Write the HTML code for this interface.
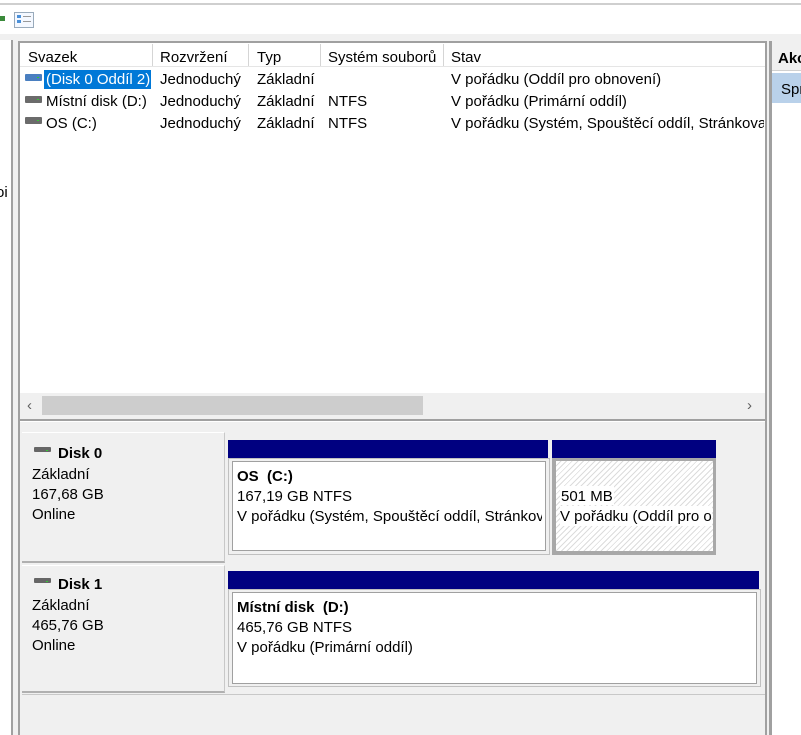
<!DOCTYPE html>
<html><head><meta charset="utf-8"><style>
*{margin:0;padding:0;box-sizing:border-box}
body{width:801px;height:735px;overflow:hidden;background:#f0f0f0;font-family:"Liberation Sans",sans-serif;font-size:15px;color:#000;position:relative}
.a{position:absolute}
.t{position:absolute;white-space:nowrap;line-height:19px}
.b{font-weight:bold}
.hdiv{position:absolute;top:44px;width:1px;height:22px;background:#d5d5d5}
.ico{position:absolute;width:17px;height:7px;background:#6b6b6b;border-radius:1px}
.ico:after{content:"";position:absolute;right:3px;top:3px;width:2px;height:1px;background:#3c3}
</style></head><body>
<div class="a" style="left:0;top:0;width:801px;height:34px;background:#fff;border-top:1px solid #fff"></div>
<div class="a" style="left:0;top:3px;width:801px;height:2px;background:#cfcfcf"></div>
<div class="a" style="left:0;top:16px;width:5px;height:5px;background:#3a8a3a"></div>
<div class="a" style="left:14px;top:12px;width:20px;height:16px;border:1px solid #9ab;background:#f4f8ff"></div>
<div class="a" style="left:17px;top:15px;width:4px;height:3px;background:#4a90d9"></div>
<div class="a" style="left:17px;top:20px;width:4px;height:3px;background:#4a90d9"></div>
<div class="a" style="left:23px;top:16px;width:8px;height:1px;background:#999"></div>
<div class="a" style="left:23px;top:21px;width:8px;height:1px;background:#999"></div>
<div class="a" style="left:0;top:40px;width:13px;height:695px;background:#fff;border-right:2px solid #a0a0a0"></div>
<div class="t" style="left:-4px;top:183px">oi</div>
<div class="a" style="left:18px;top:41px;width:749px;height:694px;border:2px solid #a0a0a0;border-bottom:none;background:#f0f0f0"></div>
<div class="a" style="left:20px;top:43px;width:745px;height:350px;background:#fff"></div>
<div class="a" style="left:20px;top:43px;width:745px;height:24px;background:#fff;border-bottom:1px solid #e5e5e5"></div>
<div class="hdiv" style="left:152px"></div><div class="hdiv" style="left:248px"></div><div class="hdiv" style="left:320px"></div><div class="hdiv" style="left:443px"></div>
<div class="t" style="left:28px;top:48px">Svazek</div>
<div class="t" style="left:160px;top:48px">Rozvržení</div>
<div class="t" style="left:257px;top:48px">Typ</div>
<div class="t" style="left:328px;top:48px">Systém souborů</div>
<div class="t" style="left:451px;top:48px">Stav</div>
<div class="ico" style="left:25px;top:74px;background:#4a7fc0"></div>
<div class="a" style="left:44px;top:70px;width:107px;height:19px;background:#0078d7"></div>
<div class="t" style="left:46px;top:70px;color:#fff">(Disk 0 Oddíl 2)</div>
<div class="ico" style="left:25px;top:96px"></div>
<div class="t" style="left:46px;top:92px">Místní disk (D:)</div>
<div class="ico" style="left:25px;top:117px"></div>
<div class="t" style="left:46px;top:114px">OS (C:)</div>
<div class="t" style="left:160px;top:70px">Jednoduchý</div><div class="t" style="left:257px;top:70px">Základní</div><div class="t" style="left:451px;top:70px">V pořádku (Oddíl pro obnovení)</div>
<div class="t" style="left:160px;top:92px">Jednoduchý</div><div class="t" style="left:257px;top:92px">Základní</div><div class="t" style="left:328px;top:92px">NTFS</div><div class="t" style="left:451px;top:92px">V pořádku (Primární oddíl)</div>
<div class="t" style="left:160px;top:114px">Jednoduchý</div><div class="t" style="left:257px;top:114px">Základní</div><div class="t" style="left:328px;top:114px">NTFS</div>
<div class="a" style="left:451px;top:114px;width:313px;overflow:hidden;white-space:nowrap;line-height:19px">V pořádku (Systém, Spouštěcí oddíl, Stránkovací</div>
<div class="a" style="left:20px;top:395px;width:745px;height:21px;background:#f0f0f0"></div>
<div class="a" style="left:42px;top:396px;width:381px;height:19px;background:#cdcdcd"></div>
<div class="t" style="left:27px;top:396px;color:#606060">‹</div>
<div class="t" style="left:747px;top:396px;color:#606060">›</div>
<div class="a" style="left:20px;top:419px;width:745px;height:3px;border-top:2px solid #a0a0a0;border-bottom:1px solid #fff"></div>
<div class="a" style="left:22px;top:432px;width:203px;height:131px;background:#f0f0f0;border-right:1px solid #c8c8c8;border-bottom:2px solid #b0b0b0;border-top:1px solid #fff"></div>
<div class="ico" style="left:34px;top:447px;height:5px;background:#666"></div>
<div class="t b" style="left:58px;top:444px">Disk 0</div>
<div class="t" style="left:32px;top:465px">Základní</div>
<div class="t" style="left:32px;top:485px">167,68 GB</div>
<div class="t" style="left:32px;top:505px">Online</div>
<div class="a" style="left:228px;top:440px;width:320px;height:18px;background:#000080"></div>
<div class="a" style="left:552px;top:440px;width:164px;height:18px;background:#000080"></div>
<div class="a" style="left:228px;top:458px;width:322px;height:97px;background:#f0f0f0;border:1px solid #c0c0c0"></div>
<div class="a" style="left:232px;top:461px;width:314px;height:90px;background:#fff;border:1px solid #a0a0a0"></div>
<div class="t b" style="left:237px;top:467px">OS&nbsp; (C:)</div>
<div class="t" style="left:237px;top:487px">167,19 GB NTFS</div>
<div class="a" style="left:237px;top:507px;width:305px;overflow:hidden;white-space:nowrap;line-height:19px">V pořádku (Systém, Spouštěcí oddíl, Stránkovací</div>
<div class="a" style="left:552px;top:458px;width:164px;height:97px;background:#a8a8a8"></div>
<div class="a" style="left:556px;top:461px;width:157px;height:90px;background:repeating-linear-gradient(135deg,#fff 0 3px,#dcdcdc 3px 4px)"></div>
<div class="a" style="left:560px;top:486px;width:54px;height:19px;background:#fff"></div>
<div class="t" style="left:561px;top:487px">501 MB</div>
<div class="a" style="left:560px;top:506px;width:152px;height:20px;background:#fff;overflow:hidden;white-space:nowrap;line-height:19px;padding-top:1px">V pořádku (Oddíl pro obnovení)</div>
<div class="a" style="left:22px;top:565px;width:203px;height:128px;background:#f0f0f0;border-right:1px solid #c8c8c8;border-bottom:2px solid #b0b0b0;border-top:1px solid #fff"></div>
<div class="ico" style="left:34px;top:578px;height:5px;background:#666"></div>
<div class="t b" style="left:58px;top:575px">Disk 1</div>
<div class="t" style="left:32px;top:596px">Základní</div>
<div class="t" style="left:32px;top:616px">465,76 GB</div>
<div class="t" style="left:32px;top:636px">Online</div>
<div class="a" style="left:228px;top:571px;width:531px;height:18px;background:#000080"></div>
<div class="a" style="left:228px;top:589px;width:533px;height:98px;background:#f0f0f0;border:1px solid #c0c0c0"></div>
<div class="a" style="left:232px;top:592px;width:525px;height:92px;background:#fff;border:1px solid #a0a0a0"></div>
<div class="t b" style="left:237px;top:598px">Místní disk&nbsp; (D:)</div>
<div class="t" style="left:237px;top:618px">465,76 GB NTFS</div>
<div class="t" style="left:237px;top:638px">V pořádku (Primární oddíl)</div>
<div class="a" style="left:22px;top:694px;width:743px;height:1px;background:#c8c8c8"></div>
<div class="a" style="left:769px;top:41px;width:3px;height:694px;background:#a0a0a0"></div>
<div class="a" style="left:772px;top:43px;width:29px;height:692px;background:#fff"></div>
<div class="a" style="left:772px;top:43px;width:29px;height:28px;background:#f0f0f0;border-bottom:1px solid #d0d0d0"></div>
<div class="t b" style="left:778px;top:49px">Akce</div>
<div class="a" style="left:772px;top:73px;width:29px;height:30px;background:#b9d1ea"></div>
<div class="t" style="left:781px;top:80px">Správa</div>
</body></html>
